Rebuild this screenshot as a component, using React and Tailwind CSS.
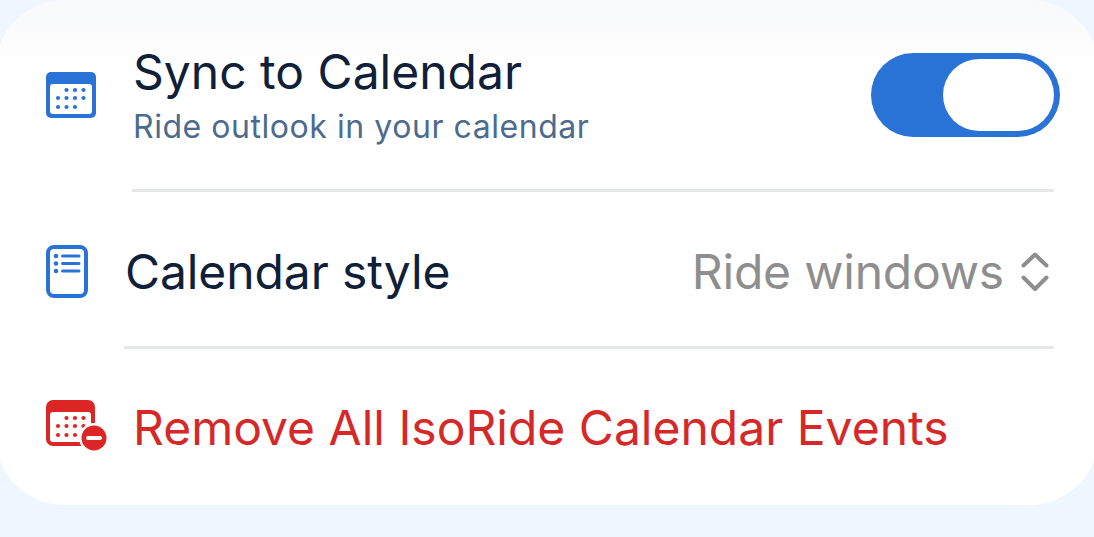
export default function App() {
  const dots1 = [[20.5,18],[29,18],[37.5,18],[12,26],[20.5,26],[29,26],[37.5,26],[12,35],[20.5,35],[29,35]];
  return (
    <div className="w-[1094px] h-[537px] overflow-hidden bg-[#f0f6fe] font-['Inter','Liberation_Sans',sans-serif]">
      <div className="ml-[-5px] w-[1104px] h-[505px] rounded-[70px] bg-[linear-gradient(180deg,#f8f9fb_0px,#fcfcfd_40px,#ffffff_75px)] flex flex-col">
        {/* Row 1 */}
        <div className="h-[192px] flex flex-col shrink-0">
          <div className="flex-1 flex items-center pt-[1px]">
            <div className="ml-[51px] w-[50px] h-[46px] shrink-0">
              <svg width="50" height="46" viewBox="0 0 50 46">
                <rect x="0" y="0" width="50" height="46" rx="5" fill="#2a73d6" />
                <rect x="4" y="12" width="42" height="30" rx="3" fill="#fff" />
                {dots1.map(([x, y], i) => <circle key={i} cx={x} cy={y} r="2.1" fill="#2a73d6" />)}
              </svg>
            </div>
            <div className="ml-[37px] flex flex-col">
              <div className="text-[#0f2038] text-[48px] leading-[56px]">Sync to Calendar</div>
              <div className="text-[#4c6b8f] text-[32px] leading-[38px] tracking-[0.55px] mt-[8px]">Ride outlook in your calendar</div>
            </div>
            <div className="ml-auto mr-[39px] w-[189px] h-[84px] rounded-full bg-[#2a73d6] flex items-center justify-end pr-[6px]">
              <div className="w-[111px] h-[72px] rounded-full bg-white" />
            </div>
          </div>
          <div className="ml-[137px] mr-[45px] h-[3px] bg-[#e6e7e9]" />
        </div>
        {/* Row 2 */}
        <div className="h-[157px] flex flex-col shrink-0">
          <div className="flex-1 flex items-center pt-[6px]">
            <div className="ml-[51px] w-[42px] h-[53px] shrink-0 mt-[-1px]">
              <svg width="42" height="53" viewBox="0 0 42 53">
                <rect x="2" y="2" width="38" height="49" rx="6" fill="none" stroke="#2a73d6" strokeWidth="4" />
                <circle cx="10" cy="11" r="2.3" fill="#2a73d6" />
                <circle cx="10" cy="18.5" r="2.3" fill="#2a73d6" />
                <circle cx="10" cy="26" r="2.3" fill="#2a73d6" />
                <path d="M16.5 11H33M16.5 18.5H33M16.5 26H33" stroke="#2a73d6" strokeWidth="3" strokeLinecap="round" />
              </svg>
            </div>
            <div className="ml-[37px] text-[#0f2038] text-[48px] leading-[56px] tracking-[-0.1px]">Calendar style</div>
            <div className="ml-auto flex items-center mr-[50px]">
              <span className="text-[#8e8e8e] text-[48px] leading-[56px] tracking-[-0.2px]">Ride windows</span>
              <svg className="ml-[17px]" width="28" height="40" viewBox="0 0 28 40">
                <path d="M2.5 13.5L14 2.5L25.5 13.5M2.5 25.5L14 37L25.5 25.5" fill="none" stroke="#8e8e8e" strokeWidth="4" strokeLinecap="round" strokeLinejoin="round" />
              </svg>
            </div>
          </div>
          <div className="ml-[129px] mr-[45px] h-[3px] bg-[#e6e7e9]" />
        </div>
        {/* Row 3 */}
        <div className="flex-1 flex items-start pt-[51px]">
          <div className="ml-[51px] w-[62px] h-[52px] shrink-0">
            <svg width="62" height="52" viewBox="0 0 62 52">
              <rect x="0" y="0" width="49" height="46" rx="7" fill="#dc2626" />
              <rect x="4" y="12" width="41" height="30" rx="3" fill="#fff" />
              {dots1.map(([x, y], i) => <circle key={i} cx={x} cy={y} r="2.1" fill="#dc2626" />)}
              <circle cx="48" cy="38" r="15" fill="#fff" />
              <circle cx="48" cy="38" r="12.5" fill="#dc2626" />
              <rect x="40" y="36" width="16" height="4" rx="2" fill="#fff" />
            </svg>
          </div>
          <div className="ml-[25px] text-[#d62828] text-[48px] leading-[56px]">Remove All IsoRide Calendar Events</div>
        </div>
      </div>
    </div>
  );
}
